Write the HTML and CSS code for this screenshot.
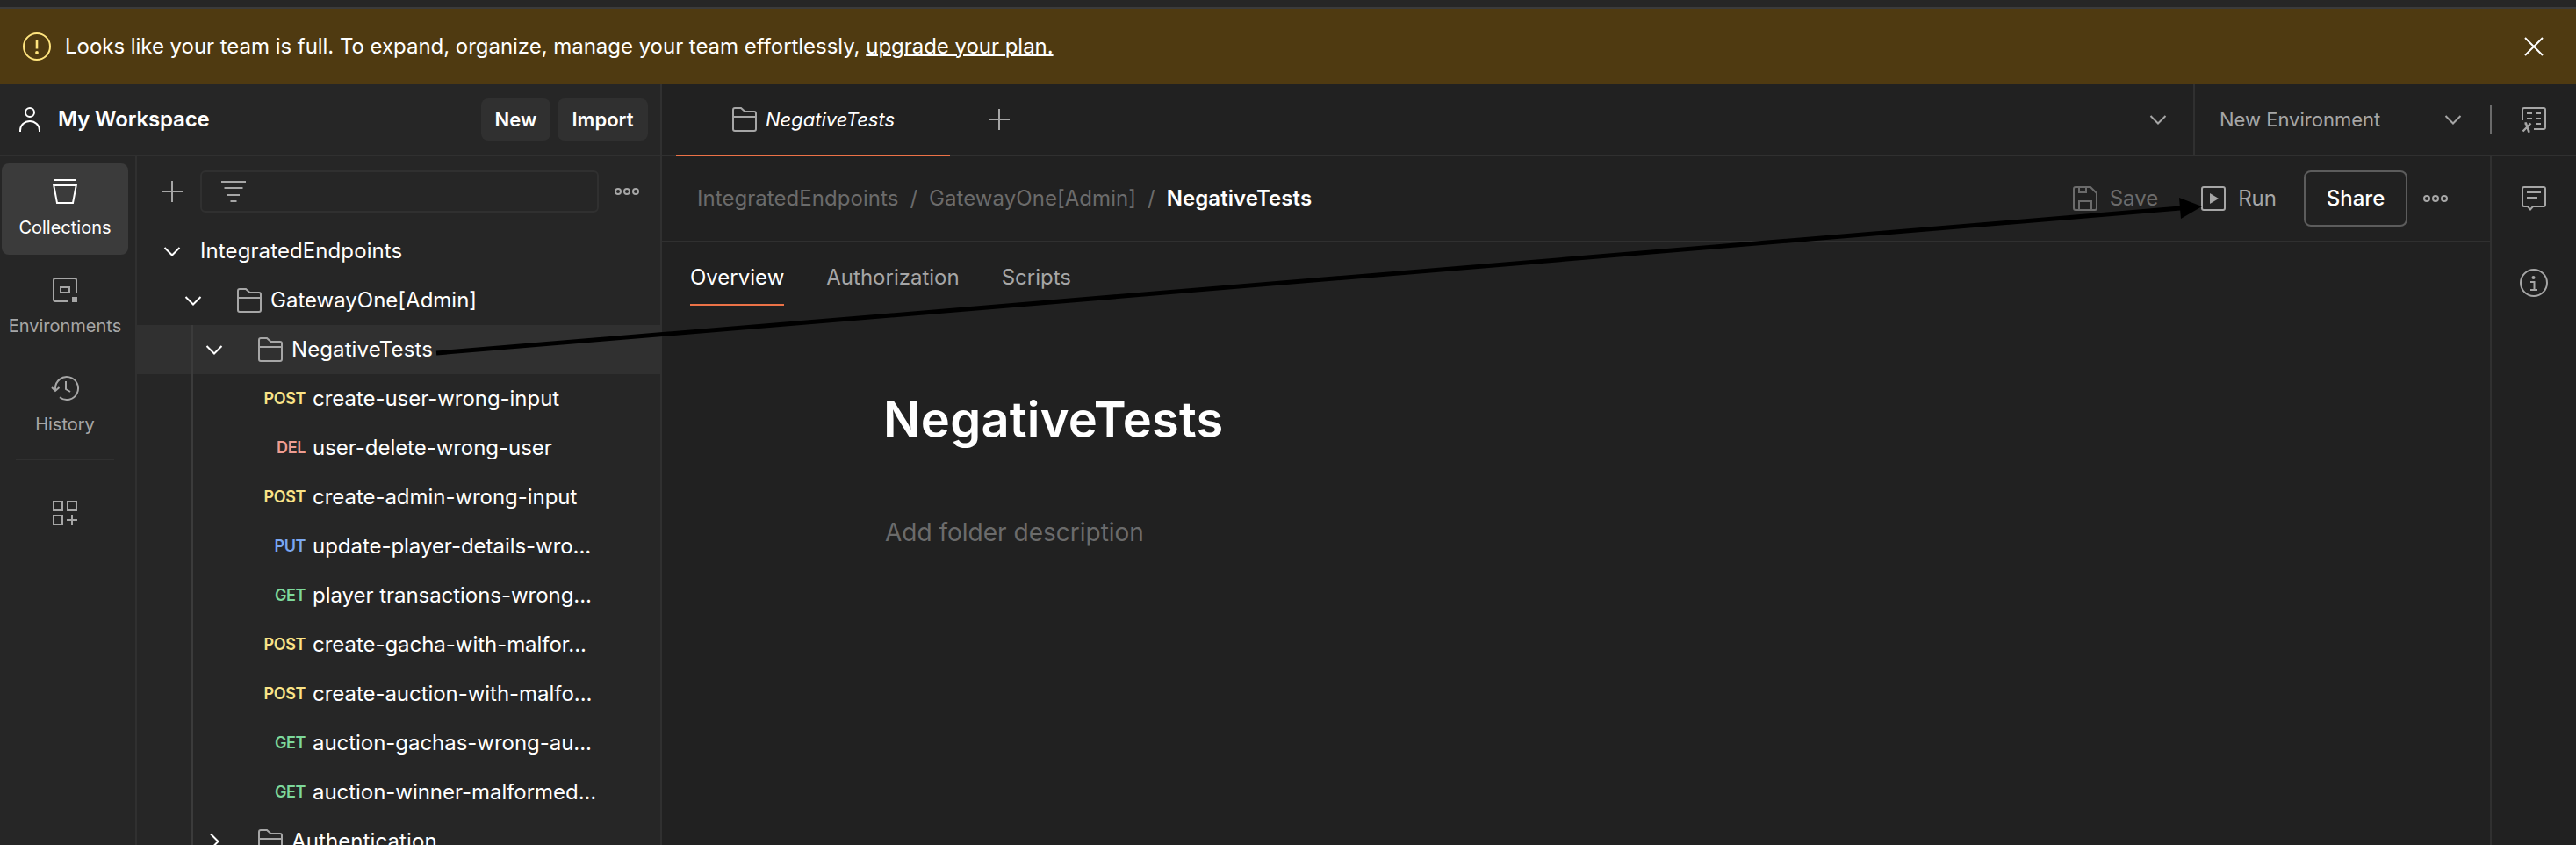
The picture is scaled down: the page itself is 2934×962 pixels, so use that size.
FILE: index.html
```html
<!DOCTYPE html>
<html lang="en">
<head>
<meta charset="utf-8">
<title>NegativeTests</title>
<link rel="stylesheet" href="styles.css">
</head>
<body>
<svg class="sprite" width="0" height="0">
  <symbol id="folder" viewBox="0 0 28 28"><path d="M1 24.5V3A2 2 0 0 1 3 1H10L14.5 5H25A2 2 0 0 1 27 7V25A2 2 0 0 1 25 27H3A2 2 0 0 1 1 25ZM1 11H27"/></symbol>
  <symbol id="down" viewBox="0 0 28 28"><path d="M5.5 10L14 18.5L22.5 10"/></symbol>
  <symbol id="right" viewBox="0 0 28 28"><path d="M10 5.500L18.500 14L10 22.500"/></symbol>
  <symbol id="plus" viewBox="0 0 28 28"><path d="M14 2V26M2 14H26"/></symbol>
  <symbol id="dots" viewBox="0 0 28 28"><circle cx="4" cy="14" r="3"/><circle cx="14" cy="14" r="3"/><circle cx="24" cy="14" r="3"/></symbol>
</svg>
<div class="app">
  <div class="topbar"></div>
  <div class="banner">
    <svg class="warn" viewBox="0 0 32 32"><circle cx="16" cy="16" r="15"/><path d="M16 8.500V18.500"/><circle class="solid" cx="16" cy="23" r="1.900"/></svg>
    <p class="banner-text">Looks like your team is full. To expand, organize, manage your team effortlessly, <a class="upgrade">upgrade your plan.</a></p>
    <svg class="icon close" viewBox="0 0 28 28"><path d="M4 4L24 24M24 4L4 24"/></svg>
  </div>
  <div class="columns">
    <aside class="side">
      <header class="side-head">
        <svg class="icon white" viewBox="0 0 28 28"><circle cx="14" cy="6" r="5"/><path d="M3 28V26.500A11 10.500 0 0 1 25 26.500V28"/></svg>
        <span class="workspace">My Workspace</span>
        <button class="btn btn-new">New</button>
        <button class="btn btn-import">Import</button>
      </header>
      <div class="side-body">
        <nav class="rail">
          <div class="rail-item active"><svg class="icon white" viewBox="0 0 28 28"><path d="M2 1H26M1.200 7H26.800L23 27H5Z"/></svg><span>Collections</span></div>
          <div class="rail-item"><svg class="icon" viewBox="0 0 28 28"><path d="M27 18V3A2 2 0 0 0 25 1H3A2 2 0 0 0 1 3V25A2 2 0 0 0 3 27H18M9 11H19V17H9Z"/><path class="solid" d="M22 22H28V28H22Z"/></svg><span>Environments</span></div>
          <div class="rail-item"><svg class="icon" viewBox="0 0 28 28"><path d="M3 17V14A13 13 0 1 1 8 24.300M-1 13L3 17L7.500 13M15 6V15L20 18"/></svg><span>History</span></div>
          <div class="rail-sep"></div>
          <svg class="icon" viewBox="0 0 28 28"><path d="M1 1H11V11H1ZM17 1H27V11H17ZM1 17H11V27H1ZM22 16V28M16 22H28"/></svg>
        </nav>
        <div class="tree">
          <div class="filter-row">
            <svg class="icon"><use href="#plus"/></svg>
            <div class="filter"><svg class="icon" viewBox="0 0 28 28"><path d="M0 3H28M3.500 10H24.500M7 18H21M10.500 25H17.500"/></svg></div>
            <svg class="icon"><use href="#dots"/></svg>
          </div>
          <div class="row lvl1"><svg class="icon white"><use href="#down"/></svg><span class="name wide">IntegratedEndpoints</span></div>
          <div class="row lvl2"><svg class="icon white"><use href="#down"/></svg><svg class="icon fold"><use href="#folder"/></svg><span class="name">GatewayOne[Admin]</span></div>
          <div class="guide">
            <div class="row lvl3 selected"><svg class="icon white"><use href="#down"/></svg><svg class="icon fold"><use href="#folder"/></svg><span class="name wide">NegativeTests</span></div>
            <div class="row req"><span class="method post">POST</span><span class="name">create-user-wrong-input</span></div>
            <div class="row req"><span class="method del">DEL</span><span class="name">user-delete-wrong-user</span></div>
            <div class="row req"><span class="method post">POST</span><span class="name">create-admin-wrong-input</span></div>
            <div class="row req"><span class="method put">PUT</span><span class="name">update-player-details-wro...</span></div>
            <div class="row req"><span class="method get">GET</span><span class="name">player transactions-wrong...</span></div>
            <div class="row req"><span class="method post">POST</span><span class="name">create-gacha-with-malfor...</span></div>
            <div class="row req"><span class="method post">POST</span><span class="name">create-auction-with-malfo...</span></div>
            <div class="row req"><span class="method get">GET</span><span class="name">auction-gachas-wrong-au...</span></div>
            <div class="row req"><span class="method get">GET</span><span class="name">auction-winner-malformed...</span></div>
            <div class="row lvl3"><svg class="icon white"><use href="#right"/></svg><svg class="icon fold"><use href="#folder"/></svg><span class="name wide">Authentication</span></div>
          </div>
        </div>
      </div>
    </aside>
    <main class="main">
      <div class="tabs">
        <div class="tab"><svg class="icon"><use href="#folder"/></svg><span>NegativeTests</span></div>
        <svg class="icon"><use href="#plus"/></svg>
        <svg class="icon tabs-more"><use href="#down"/></svg>
        <div class="env"><span>New Environment</span><svg class="icon"><use href="#down"/></svg></div>
        <div class="env-sep"></div>
        <svg class="icon env-view" viewBox="0 0 28 28"><path d="M1 15V3A2 2 0 0 1 3 1H25A2 2 0 0 1 27 3V23A2 2 0 0 1 25 25H14M6 7H12M16 7H22M6 13H12M16 13H22M16 19H22"/><path class="bold" d="M3.500 18.500H5L8 27.500H9.500M10.500 18.500L1.500 27.500"/></svg>
      </div>
      <div class="content-row">
        <div class="content">
          <div class="crumbs">
            <span>IntegratedEndpoints</span><span class="slash">/</span><span>GatewayOne[Admin]</span><span class="slash">/</span><b class="current">NegativeTests</b>
            <div class="actions">
              <div class="action save"><svg class="icon" viewBox="0 0 28 28"><path d="M1 3A2 2 0 0 1 3 1H20L27 8V25A2 2 0 0 1 25 27H3A2 2 0 0 1 1 25ZM7 1V7H15V1M7 27V17H21V27"/></svg><span>Save</span></div>
              <div class="action run"><svg class="icon" viewBox="0 0 28 28"><rect x="1" y="1" width="26" height="26" rx="2"/><path class="solid" d="M10 8L20 14L10 20Z"/></svg><span>Run</span></div>
              <button class="share">Share</button>
              <svg class="icon"><use href="#dots"/></svg>
            </div>
          </div>
          <div class="subtabs"><span class="subtab on">Overview</span><span class="subtab">Authorization</span><span class="subtab">Scripts</span></div>
          <div class="doc"><h1 class="title">NegativeTests</h1><p class="desc">Add folder description</p></div>
        </div>
        <div class="right-rail">
          <svg class="icon" viewBox="0 0 28 28"><path d="M3 1H25A2 2 0 0 1 27 3V21A2 2 0 0 1 25 23H13L10 26.500L7 23H3A2 2 0 0 1 1 21V3A2 2 0 0 1 3 1ZM6 7H22M6 13H18"/></svg>
          <svg class="info" viewBox="0 0 32 32"><circle cx="16" cy="16" r="15"/><path d="M12 15H16.500V24M12 24H20"/><circle class="solid" cx="15.500" cy="10" r="2"/></svg>
        </div>
      </div>
    </main>
  </div>
  <svg class="arrow" viewBox="0 0 2934 962"><path class="shaft" d="M497 402L2486 236.800"/><path class="head" d="M2508 235L2482 225L2484 249Z"/></svg>
</div>
</body>
</html>
```
FILE: styles.css
```css
* { box-sizing: border-box; margin: 0; }
body { background: #212121; color: #fff; font: 24px/32px Inter, sans-serif; overflow: hidden; }
button { font: inherit; color: inherit; border: 0; padding: 0; }
.sprite { display: none; }
.app { position: relative; width: 2934px; height: 962px; overflow: hidden; display: flex; flex-direction: column; }
.icon { width: 28px; height: 28px; flex: none; fill: none; stroke: #a6a6a6; stroke-width: 2; overflow: visible; }
.white { stroke: #fff; }
.icon .solid { fill: #a6a6a6; stroke: none; }
.icon .bold { stroke-width: 2.4; }

.topbar { height: 10px; flex: none; background: #262626; border-bottom: 2px solid #3b3b3b; }
.banner { height: 86px; flex: none; background: #4f3a11; display: flex; align-items: center; padding: 0 34px 0 26px; }
.warn { width: 32px; height: 32px; fill: none; stroke: #ffe47e; stroke-width: 2; }
.warn path { stroke-width: 2.6; }
.warn .solid { fill: #ffe47e; stroke: none; }
.banner-text { margin-left: 16px; flex: 1; letter-spacing: -0.035px; }
.upgrade { text-decoration: underline; text-decoration-thickness: 2px; }
.close { stroke: #fff; }

.columns { flex: 1; min-height: 0; display: flex; }
.side { width: 754px; flex: none; background: #262626; border-right: 2px solid #303030; display: flex; flex-direction: column; }
.side-head { height: 82px; flex: none; border-bottom: 2px solid #303030; display: flex; align-items: center; padding: 0 14px 0 20px; }
.workspace { font-weight: 600; margin-left: 18px; flex: 1; letter-spacing: -0.15px; }
.btn { height: 48px; border-radius: 8px; background: #303030; font-weight: 600; font-size: 22px; }
.btn-new { width: 79px; margin-right: 8px; }
.btn-import { width: 103px; }
.side-body { flex: 1; min-height: 0; display: flex; }
.rail { width: 156px; flex: none; border-right: 2px solid #303030; padding: 8px 8px 0 2px; display: flex; flex-direction: column; align-items: center; }
.rail-item { width: 144px; height: 104px; margin-bottom: 8px; border-radius: 8px; padding-top: 18px; display: flex; flex-direction: column; align-items: center; gap: 11px; font-size: 20px; line-height: 32px; color: #a6a6a6; flex: none; }
.rail-item.active { background: #3b3b3b; color: #fff; }
.rail-sep { width: 112px; height: 2px; background: #303030; flex: none; margin: 0 0 46px; }

.tree { flex: 1; min-width: 0; }
.filter-row { height: 80px; display: flex; align-items: center; padding: 0 24px 0 26px; }
.filter { width: 454px; height: 48px; margin: 0 18px; border: 2px solid #303030; border-radius: 6px; padding-left: 22px; display: flex; align-items: center; }
.row { height: 56px; display: flex; align-items: center; white-space: nowrap; }
.wide { letter-spacing: 0.1px; }
.lvl1 { padding-left: 26px; }
.lvl1 .name { margin-left: 18px; }
.lvl2 { padding-left: 50px; }
.lvl3 { padding-left: 74px; }
.fold { margin: 0 10px 0 36px; }
.guide { background: linear-gradient(#3b3b3b, #3b3b3b) 62px 0 / 2px 100% no-repeat; }
.selected { background: linear-gradient(#3b3b3b, #3b3b3b) 62px 0 / 2px 100% no-repeat #303030; }
.req .name { letter-spacing: -0.04px; }
.method { width: 192px; text-align: right; font-size: 18px; font-weight: 600; margin-right: 8px; letter-spacing: -0.4px; }
.post { color: #fae387; }
.get { color: #7dd89b; }
.put { color: #7ba7f0; }
.del { color: #ee9c91; }

.main { flex: 1; min-width: 0; display: flex; flex-direction: column; }
.tabs { height: 82px; flex: none; display: flex; align-items: center; border-bottom: 2px solid #303030; padding-left: 16px; color: #a6a6a6; font-size: 22px; }
.tab { width: 312px; height: 82px; align-self: flex-start; border-bottom: 2px solid #ec7247; display: flex; align-items: center; gap: 10px; padding-left: 64px; margin-right: 42px; font-style: italic; color: #fff; }
.tabs-more { margin-left: auto; margin-right: 26px; }
.env { width: 338px; height: 80px; border-left: 2px solid #303030; padding: 0 28px; display: flex; align-items: center; justify-content: space-between; }
.env-sep { width: 2px; height: 32px; background: #6b6b6b; }
.env-view { margin: 0 34px; }
.content-row { flex: 1; min-height: 0; display: flex; }
.content { flex: 1; min-width: 0; }
.crumbs { height: 98px; border-bottom: 2px solid #303030; display: flex; align-items: center; padding-left: 40px; color: #6b6b6b; letter-spacing: 0.05px; }
.slash { margin: 0 13px; }
.current { color: #fff; font-weight: 600; }
.actions { margin-left: auto; display: flex; align-items: center; padding-right: 48px; letter-spacing: 0; }
.action { display: flex; align-items: center; gap: 14px; }
.save { color: #6b6b6b; }
.save .icon { stroke: #6b6b6b; }
.run { color: #a6a6a6; margin-left: 49px; }
.share { width: 118px; height: 64px; border: 2px solid #5c5c5c; border-radius: 8px; background: none; color: #fff; font-weight: 500; margin: 0 18px 0 31px; }
.subtabs { height: 72px; display: flex; gap: 48px; padding-left: 32px; color: #a6a6a6; }
.subtab { height: 72px; line-height: 80px; }
.subtab.on { color: #fff; border-bottom: 2px solid #ec7247; }
.doc { padding: 90px 0 0 252px; }
.title { font-size: 56px; line-height: 80px; font-weight: 600; letter-spacing: 0.25px; }
.desc { margin-top: 68px; font-size: 28px; line-height: 40px; color: #6b6b6b; padding-left: 2px; }
.right-rail { width: 98px; flex: none; border-left: 2px solid #303030; padding-top: 34px; display: flex; flex-direction: column; align-items: center; gap: 66px; }
.info { width: 32px; height: 32px; fill: none; stroke: #a6a6a6; stroke-width: 2; flex: none; }
.info .solid { fill: #a6a6a6; stroke: none; }
.arrow { position: absolute; left: 0; top: 0; width: 2934px; height: 962px; pointer-events: none; }
.shaft { stroke: #000; stroke-width: 5; }
.head { fill: #000; }
```
